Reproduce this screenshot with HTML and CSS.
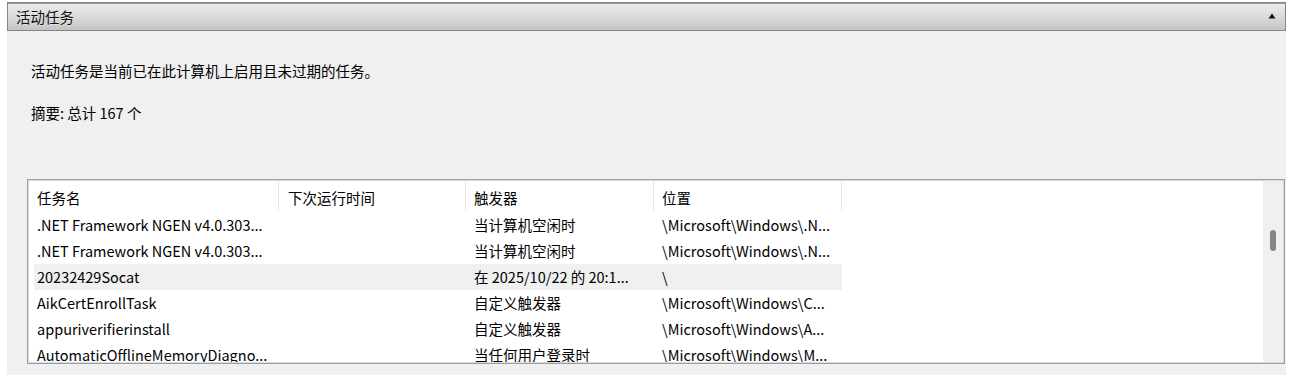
FILE: index.html
```html
<!DOCTYPE html>
<html lang="zh-CN">
<head>
<meta charset="utf-8">
<title>活动任务</title>
<link rel="stylesheet" href="styles.css">
</head>
<body>
<div class="panel">
  <div class="bar">
    <span class="bar-title">活动任务</span>
    <svg class="collapse" width="8" height="6" viewBox="0 0 8 6"><polygon points="4,0.5 7.5,5.5 0.5,5.5" fill="#111"/></svg>
  </div>
  <div class="content">
    <p class="desc">活动任务是当前已在此计算机上启用且未过期的任务。</p>
    <p class="summary">摘要: 总计 167 个</p>
  </div>
  <div class="table">
    <div class="list">
      <div class="head">
        <div class="cell c1">任务名</div>
        <div class="cell c2">下次运行时间</div>
        <div class="cell c3">触发器</div>
        <div class="cell c4">位置</div>
      </div>
      <div class="row">
        <div class="cell c1">.NET Framework NGEN v4.0.303...</div>
        <div class="cell c2"></div>
        <div class="cell c3">当计算机空闲时</div>
        <div class="cell c4">\Microsoft\Windows\.N...</div>
      </div>
      <div class="row">
        <div class="cell c1">.NET Framework NGEN v4.0.303...</div>
        <div class="cell c2"></div>
        <div class="cell c3">当计算机空闲时</div>
        <div class="cell c4">\Microsoft\Windows\.N...</div>
      </div>
      <div class="row hl">
        <div class="cell c1">20232429Socat</div>
        <div class="cell c2"></div>
        <div class="cell c3">在 2025/10/22 的 20:1...</div>
        <div class="cell c4">\</div>
      </div>
      <div class="row">
        <div class="cell c1">AikCertEnrollTask</div>
        <div class="cell c2"></div>
        <div class="cell c3">自定义触发器</div>
        <div class="cell c4">\Microsoft\Windows\C...</div>
      </div>
      <div class="row">
        <div class="cell c1">appuriverifierinstall</div>
        <div class="cell c2"></div>
        <div class="cell c3">自定义触发器</div>
        <div class="cell c4">\Microsoft\Windows\A...</div>
      </div>
      <div class="row">
        <div class="cell c1">AutomaticOfflineMemoryDiagno...</div>
        <div class="cell c2"></div>
        <div class="cell c3">当任何用户登录时</div>
        <div class="cell c4">\Microsoft\Windows\M...</div>
      </div>
    </div>
    <div class="scrollbar"><div class="thumb"></div></div>
  </div>
</div>
</body>
</html>
```
FILE: styles.css
```css
html, body {
  margin: 0;
  padding: 0;
  background: #ffffff;
}
body {
  font-family: "Noto Sans CJK SC", "Noto Sans", sans-serif;
  font-size: 14.5px;
  color: #000;
  overflow: hidden;
  height: 375px;
}
.panel {
  margin: 2px 0 0 7px;
  width: 1279px;
  height: 373px;
  background: #f0f0f0;
  display: flex;
  flex-direction: column;
}
.bar {
  height: 27px;
  border: 1px solid #858585;
  box-shadow: inset 0 1px 0 #9a9a9a;
  background: linear-gradient(#ededed, #d9d9d9 55%, #c4c4c4);
  display: flex;
  align-items: center;
  justify-content: space-between;
  padding: 0 8px 0 8px;
}
.bar-title {
  line-height: 27px;
  color: #111;
  text-shadow: 0 1px 0 rgba(255,255,255,0.4);
}
.collapse {
  display: block;
  margin-right: 1px;
  margin-top: -2px;
}
.content {
  padding: 0 0 0 24px;
}
.desc {
  margin: 30px 0 0 0;
  line-height: 20px;
}
.summary {
  margin: 22px 0 0 0;
  line-height: 20px;
}
.table {
  margin: 56px 0 0 20px;
  width: 1254px;
  height: 181px;
  border: 1px solid #9c9ea6;
  box-shadow: inset 0 0 0 1px #d9dade;
  background: #fff;
  display: flex;
  padding: 1px;
  box-sizing: content-box;
}
.list {
  flex: 1;
  overflow: hidden;
  padding-left: 5px;
}
.head {
  display: flex;
  height: 30px;
  margin-bottom: 1px;
}
.head .cell {
  border-right: 1px solid #e8e8e8;
  padding-top: 4px;
  line-height: 26px;
  box-sizing: border-box;
}
.row {
  display: flex;
  height: 26px;
  width: 808px;
}
.row.hl {
  background: #f0f0f0;
}
.cell {
  line-height: 26px;
  white-space: nowrap;
  overflow: hidden;
  box-sizing: border-box;
  flex: none;
}
.c1 { width: 245px; padding-left: 3px; }
.c2 { width: 187px; padding-left: 9px; }
.c3 { width: 188px; padding-left: 8px; }
.c4 { width: 188px; padding-left: 8px; }
.scrollbar {
  width: 20px;
  margin: 0 0 0 0;
  background: #f0f0f0;
  display: flex;
  justify-content: center;
  padding-top: 49px;
  box-sizing: border-box;
}
.thumb {
  width: 6px;
  height: 21px;
  background: #858585;
  border-radius: 3px;
}
```
